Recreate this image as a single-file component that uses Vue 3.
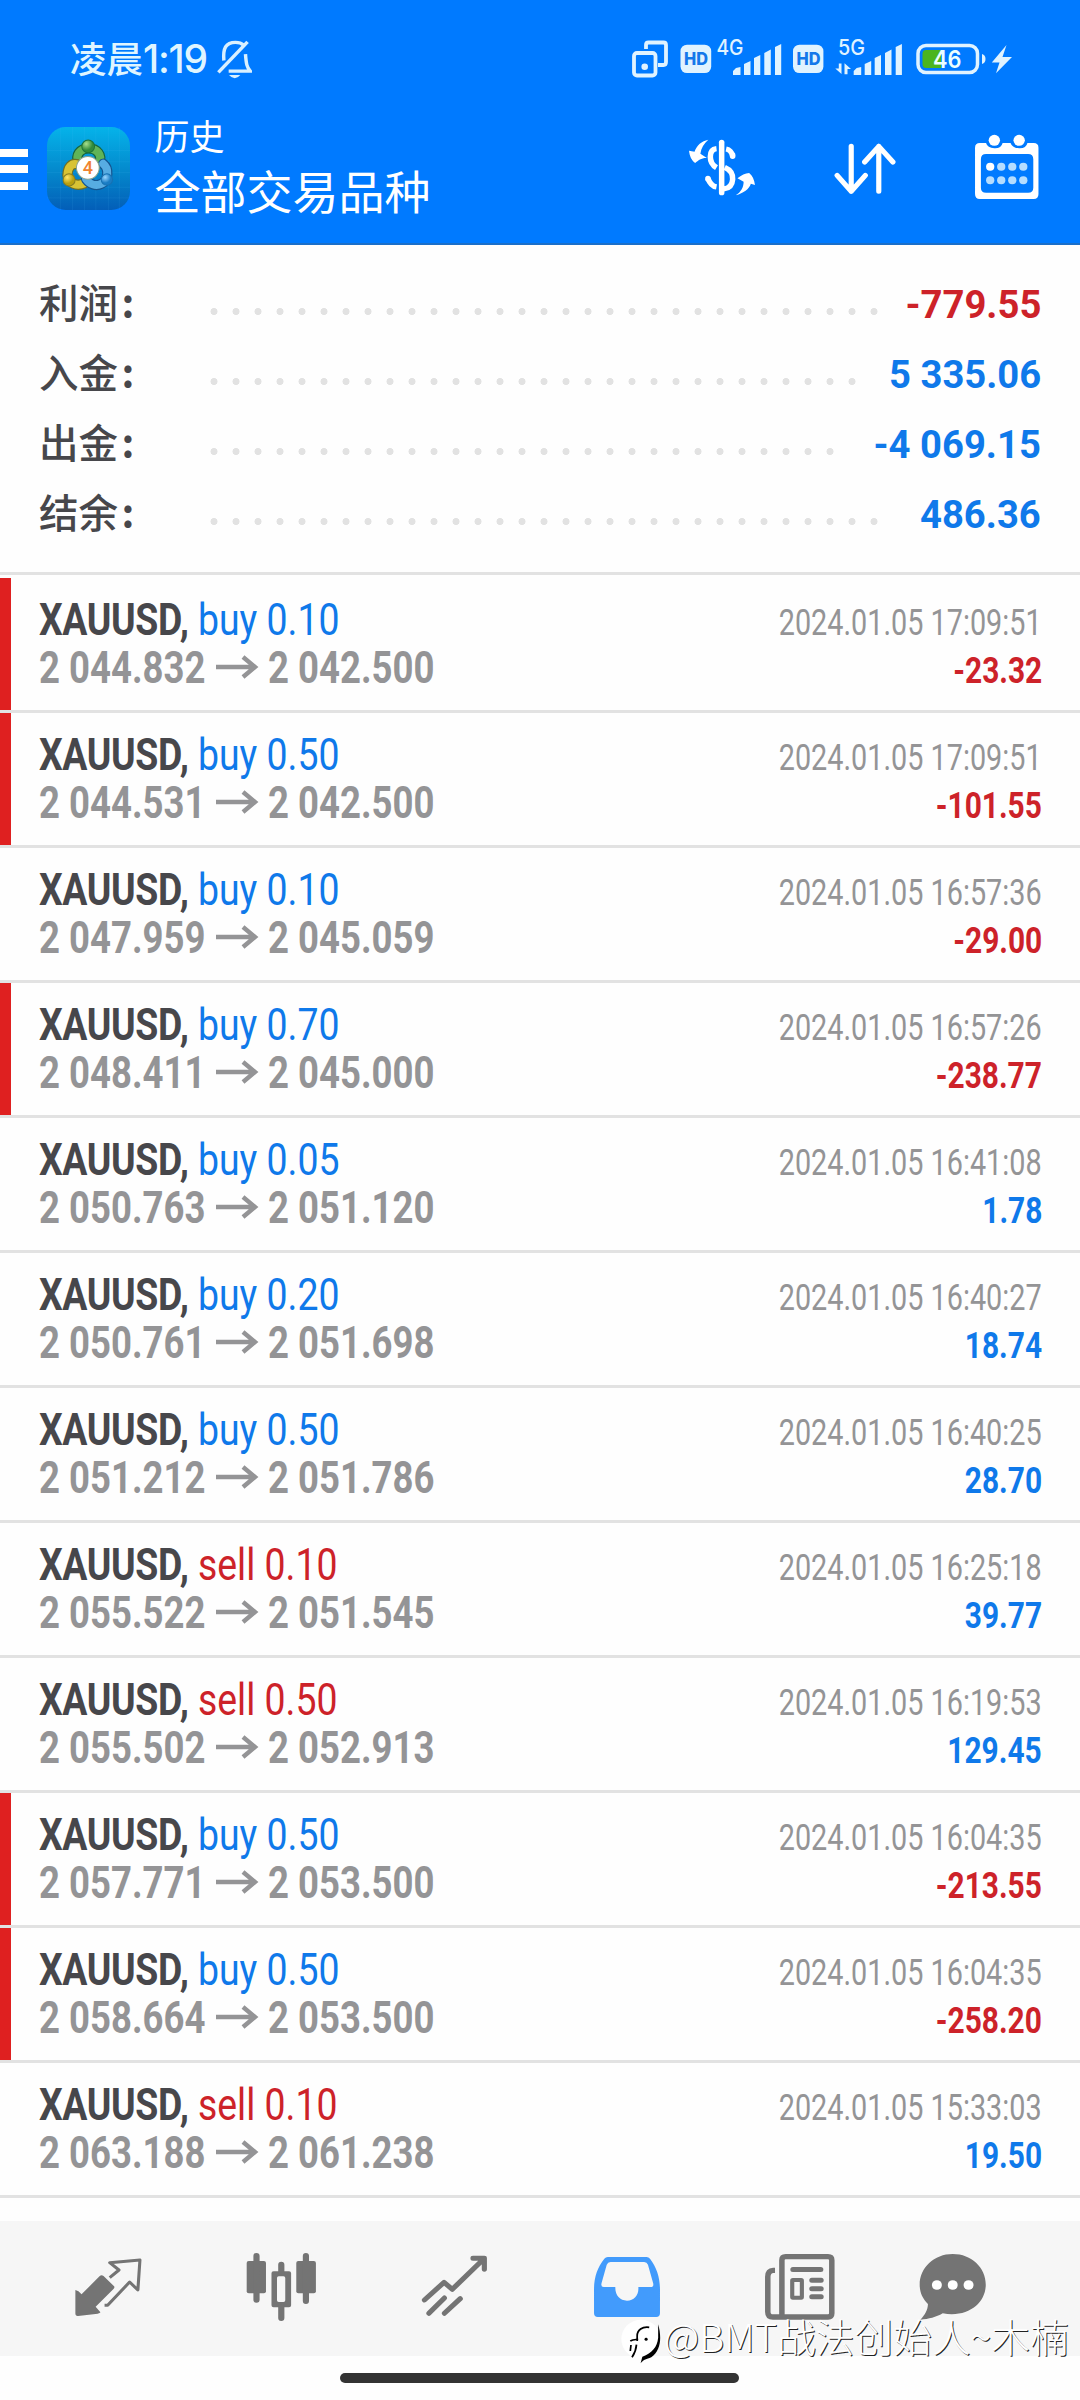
<script setup>
const summary = [
  { label: '利润', value: '-779.55', tone: 'loss', dots: 31 },
  { label: '入金', value: '5 335.06', tone: 'gain', dots: 30 },
  { label: '出金', value: '-4 069.15', tone: 'gain', dots: 29 },
  { label: '结余', value: '486.36', tone: 'gain', dots: 31 },
]
const deal = (side, lot, open, close, time, profit, flagged = false) => ({ side, lot, open, close, time, profit, flagged })
const deals = [
  deal('buy', '0.10', '2 044.832', '2 042.500', '17:09:51', '-23.32', true),
  deal('buy', '0.50', '2 044.531', '2 042.500', '17:09:51', '-101.55', true),
  deal('buy', '0.10', '2 047.959', '2 045.059', '16:57:36', '-29.00'),
  deal('buy', '0.70', '2 048.411', '2 045.000', '16:57:26', '-238.77', true),
  deal('buy', '0.05', '2 050.763', '2 051.120', '16:41:08', '1.78'),
  deal('buy', '0.20', '2 050.761', '2 051.698', '16:40:27', '18.74'),
  deal('buy', '0.50', '2 051.212', '2 051.786', '16:40:25', '28.70'),
  deal('sell', '0.10', '2 055.522', '2 051.545', '16:25:18', '39.77'),
  deal('sell', '0.50', '2 055.502', '2 052.913', '16:19:53', '129.45'),
  deal('buy', '0.50', '2 057.771', '2 053.500', '16:04:35', '-213.55', true),
  deal('buy', '0.50', '2 058.664', '2 053.500', '16:04:35', '-258.20', true),
  deal('sell', '0.10', '2 063.188', '2 061.238', '15:33:03', '19.50'),
]
const signals = [733, 853.7]
</script>

<template>
  <div class="screen">
    <header class="top">
      <div class="status">
        <span class="clock">凌晨<b>1:19</b></span>
        <svg class="bell" viewBox="630 60 102 118" width="35" height="39" preserveAspectRatio="none" fill="none" stroke="#d9f0ff" stroke-width="10">
          <path d="M634 158 L719 66" />
          <path d="M650 122 C647 86 655 67 684 67 C695 67 702 70 707 75" />
          <path d="M664 154 H727 C717 143 715 132 713 103" />
          <path d="M665 166 H698 Q682 186 665 166Z" fill="#d9f0ff" stroke="none" />
        </svg>
        <svg class="indicators" viewBox="630 36 385 48" width="385" height="48" font-family="Inter, sans-serif">
          <g fill="none" stroke="#e0f3ff" stroke-width="3.8">
            <rect x="634" y="53" width="21.500" height="22.500" rx="3" />
            <path d="M646 49V45Q646 42.500 648.500 42.500H663.500Q666 42.500 666 45V62Q666 65 663.500 65H658" />
            <rect x="918" y="45.500" width="59.500" height="27" rx="8" stroke-width="3.500" />
          </g>
          <g fill="#e0f3ff">
            <circle cx="644.700" cy="66.700" r="3.300" />
            <g v-for="x in signals" :key="x" :transform="`translate(${x} 0)`">
              <path d="M0 75V71L3 68L7.500 67V75ZM11 75V64L17.500 61V75ZM21 75V58L27.300 55V75ZM31.300 75V53L37.800 49.500V75ZM42 75V47L48.200 44V75Z" />
            </g>
            <rect x="680.500" y="44.700" width="30.700" height="28.400" rx="6.500" />
            <rect x="793" y="44.700" width="30.400" height="28.400" rx="6.500" />
            <path d="M841.500 63.500V74L835.300 68.500H838.800V63.500ZM844.500 63.300L851 69H847.500V74.300H844.500Z" />
            <path d="M982 54Q985.500 55 985.500 59T982 64Z" />
            <path d="M1006.500 45L991.800 62.500H999.500L996 73.300L1012 57H1002.500Z" />
            <text x="716.500" y="55" font-size="21" font-weight="500" textLength="27" lengthAdjust="spacingAndGlyphs">4G</text>
            <text x="838" y="55" font-size="21" font-weight="500" textLength="27" lengthAdjust="spacingAndGlyphs">5G</text>
          </g>
          <path d="M922.500 54Q922.500 50 926 50H941V68H926Q922.500 68 922.500 64Z" fill="#4bb51f" />
          <g fill="#1478ea" font-size="17" font-weight="800">
            <text x="684" y="65" textLength="24" lengthAdjust="spacingAndGlyphs">HD</text>
            <text x="796.500" y="65" textLength="24" lengthAdjust="spacingAndGlyphs">HD</text>
          </g>
          <text x="933" y="68" font-size="24" font-weight="600" fill="#eaffff" textLength="28.500" lengthAdjust="spacingAndGlyphs">46</text>
        </svg>
      </div>
      <div class="bar">
        <div class="menu"><i></i><i></i><i></i></div>
        <svg class="logo" viewBox="0 0 248 248" width="83" height="83">
          <defs>
            <linearGradient id="tile" x1="0" y1="0" x2="0" y2="1"><stop offset="0" stop-color="#05b3ea" /><stop offset=".55" stop-color="#0487cb" /><stop offset="1" stop-color="#035eb8" /></linearGradient>
            <radialGradient id="gr" cx=".35" cy=".3"><stop offset="0" stop-color="#a8e08d" /><stop offset="1" stop-color="#328b3b" /></radialGradient>
            <radialGradient id="ye" cx=".35" cy=".3"><stop offset="0" stop-color="#ffe76b" /><stop offset="1" stop-color="#b9a00f" /></radialGradient>
            <radialGradient id="bl" cx=".35" cy=".3"><stop offset="0" stop-color="#9ad6ff" /><stop offset="1" stop-color="#197cc4" /></radialGradient>
          </defs>
          <rect width="248" height="248" rx="56" fill="url(#tile)" />
          <path d="M0 70H248M0 104H248M0 136H248M0 180H248M0 212H248M40 0V248M76 0V248M112 0V248M146 0V248M184 0V248M216 0V248" stroke="#5bc8ff" stroke-opacity=".14" stroke-width="2" />
          <g stroke-linecap="round" fill="none">
            <path d="M94 108C84 84 98 64 124 64S166 84 156 108" stroke="#17643c" stroke-width="31" />
            <path d="M94 108C84 84 98 64 124 64S166 84 156 108" stroke="#60b457" stroke-width="24" />
            <path d="M92 112C74 106 62 120 61 144C64 170 90 178 112 168" stroke="#716f22" stroke-width="31" />
            <path d="M92 112C74 106 62 120 61 144C64 170 90 178 112 168" stroke="#d8c334" stroke-width="24" />
            <path d="M168 110C186 124 184 160 162 170C145 178 127 170 117 156" stroke="#14548f" stroke-width="31" />
            <path d="M168 110C186 124 184 160 162 170C145 178 127 170 117 156" stroke="#57ace2" stroke-width="24" />
          </g>
          <circle cx="123" cy="58" r="19" fill="url(#gr)" stroke="#1d7238" stroke-width="3" />
          <circle cx="66" cy="158" r="18" fill="url(#ye)" stroke="#867d22" stroke-width="3" />
          <circle cx="179" cy="157" r="17" fill="url(#bl)" stroke="#1671b2" stroke-width="3" />
          <circle cx="122" cy="122" r="34" fill="#fff" stroke="#8ba28b" stroke-width="3" />
          <text x="122" y="141" font-size="54" font-family="Roboto, sans-serif" font-weight="500" text-anchor="middle" fill="#f08330">4</text>
        </svg>
        <div class="titles"><span>历史</span><strong>全部交易品种</strong></div>
        <svg class="currency" viewBox="430 358 198 172" width="68" height="57.300" preserveAspectRatio="none">
          <path d="M489 360C470 364 455 377 449 396L433 393C435 410 440 421 451 430C460 422 470 414 485 415L466 402C468 385 477 371 489 360ZM569 527C592 520 608 508 613 492L625 496C623 480 618 468 608 460C597 460 585 467 574 476L592 486C592 503 584 517 569 527Z" fill="#fff" />
          <g fill="none" stroke="#fff" stroke-width="16">
            <path d="M528 368V519" stroke-linecap="round" />
            <path d="M513 387Q495 389 495 411T513 444M541 388Q556 391 560 409" />
            <path d="M560 406V410" stroke-linecap="round" />
            <path d="M537 443C555 451 561 462 560 479C559 496 550 506 534 508M513 502Q496 499 488 476" />
            <path d="M488 476V478" stroke-linecap="round" />
          </g>
        </svg>
        <svg class="sort" viewBox="854 367 180 156" width="62" height="52" preserveAspectRatio="none" fill="none" stroke="#fff" stroke-width="15" stroke-linecap="round" stroke-linejoin="round">
          <path d="M904 377V512M863 464L904 512L945 464M984 512V377M943 424L984 377L1025 424" />
        </svg>
        <svg class="calendar" viewBox="1260 342 190 198" width="65.500" height="66" preserveAspectRatio="none">
          <path fill="#fff" fill-rule="evenodd" d="M1277 369H1295Q1299 384 1319 385T1343 369H1366Q1371 384 1391 385T1415 369H1433Q1447 369 1447 383V522Q1447 537 1433 537H1277Q1263 537 1263 522V383Q1263 369 1277 369ZM1295 402Q1280 402 1280 418V503Q1280 518 1295 518H1417Q1432 518 1432 503V418Q1432 402 1417 402Z" />
          <circle cx="1319" cy="361" r="16.500" fill="#fff" /><circle cx="1391" cy="361" r="16.500" fill="#fff" />
          <g fill="#b5ddff"><template v-for="x in [1307, 1339, 1371, 1403]" :key="x"><circle :cx="x" cy="440" r="12" :fill="x === 1307 ? '#fff' : '#b5ddff'" /><circle :cx="x" cy="481" r="12" /></template></g>
        </svg>
      </div>
    </header>

    <section class="summary">
      <div v-for="s in summary" :key="s.label" class="sum-row">
        <span class="sum-label">{{ s.label }}<em>:</em></span>
        <i class="dots" :style="{ width: s.dots * 22 + 'px' }"></i>
        <span class="sum-value" :class="s.tone">{{ s.value }}</span>
      </div>
    </section>

    <main class="deals">
      <article v-for="(d, i) in deals" :key="i" class="deal" :class="{ flagged: d.flagged }">
        <div class="line">
          <span class="symbol"><b>XAUUSD,</b> <span :class="d.side">{{ d.side }} {{ d.lot }}</span></span>
          <span class="time">2024.01.05 {{ d.time }}</span>
        </div>
        <div class="line">
          <span class="prices">
            <span class="price">{{ d.open }}</span>
            <svg class="arrow" viewBox="0 0 43 24" width="43" height="24" fill="none" stroke="#949496" stroke-width="4.400"><path d="M0 12H39M27 2L39 12L27 22" /></svg>
            <span class="price">{{ d.close }}</span>
          </span>
          <span class="profit" :class="d.profit[0] === '-' ? 'loss' : 'gain'">{{ d.profit }}</span>
        </div>
      </article>
    </main>

    <nav class="tabs">
      <a><svg viewBox="216 234 198 180" width="68" height="60" preserveAspectRatio="none">
        <path d="M220 333Q229 334 238 346L291 291Q296 286 302 291L332 321Q336 325 331 330L279 383L293 400Q292 403 285 404L228 411Q220 412 220 403Z" fill="#747474" />
        <path d="M320 296L347 273L320 251L408 243L402 333L378 309L314 379H305" fill="none" stroke="#747474" stroke-width="9" stroke-linejoin="round" />
      </svg></a>
      <a><svg viewBox="714 219 205 210" width="70.600" height="70" preserveAspectRatio="none">
        <g fill="#747474"><rect x="716" y="246" width="56" height="97" rx="6" /><rect x="860" y="246" width="57" height="97" rx="6" /><path fill-rule="evenodd" d="M794 277H839Q845 277 845 283V379Q845 385 839 385H794Q788 385 788 379V283Q788 277 794 277ZM809 292Q804 292 804 297V364Q804 369 809 369H823Q828 369 828 364V297Q828 292 823 292Z" /></g>
        <path d="M744.500 231V362M888 231V366M816.500 257V278M816.500 384V417" stroke="#747474" stroke-width="18" stroke-linecap="round" />
      </svg></a>
      <a><svg viewBox="1222 228 194 187" width="66.800" height="62.300" preserveAspectRatio="none" fill="none" stroke="#747474" stroke-width="15" stroke-linecap="round" stroke-linejoin="round">
        <path d="M1232 363L1289 310L1313 331L1404 240M1373 238H1406V271M1245 403L1290 357M1290 403L1336 359" />
      </svg></a>
      <a><svg viewBox="155 228 198 186" width="68" height="62" preserveAspectRatio="none">
        <path fill="#429bfc" fill-rule="evenodd" d="M198 231H311Q317 231 321 236C340 262 350 292 350 327V400Q350 411 339 411H169Q158 411 158 400V327C158 292 168 262 188 236Q192 231 198 231ZM206 246Q198 246 195 254L180 309Q177 321 186 321H220C219 346 233 362 254 362S289 346 287 321H323Q333 321 330 309L315 254Q312 246 304 246Z" />
      </svg></a>
      <a><svg viewBox="654 219 208 204" width="71.600" height="68" preserveAspectRatio="none" fill="none" stroke="#747474">
        <path d="M686 271H681Q665 272 665 290V395Q665 411 680 411H840Q851 411 851 400V241Q851 230 840 230H717Q706 230 706 241V411" stroke-width="16" />
        <path d="M738 268.500H819M793 301H820M793 326H820M793 350.500H820" stroke-width="15" stroke-linecap="round" />
        <rect x="736" y="300" width="28" height="53" rx="2" stroke-width="12" />
      </svg></a>
      <a><svg viewBox="1101 219 197 204" width="67.800" height="68" preserveAspectRatio="none">
        <path d="M1199 222C1254 222 1295 263 1295 314C1295 369 1243 414 1170 400C1150 412 1130 417 1105 419C1118 405 1127 389 1127 372C1111 355 1103 337 1103 314C1103 263 1145 222 1199 222Z" fill="#747474" />
        <g fill="#fff"><circle cx="1153" cy="315" r="14.500" /><circle cx="1199" cy="315" r="14.500" /><circle cx="1245" cy="315" r="14.500" /></g>
      </svg></a>
    </nav>
    <footer class="home"><i></i></footer>

    <div class="mark">
      <svg viewBox="235 412 118 142" width="40.600" height="47.300" preserveAspectRatio="none">
        <ellipse cx="293" cy="478" rx="57" ry="58" fill="#fff" />
        <path d="M343 434C354 474 351 512 323 533C309 539 301 539 292 551L297 531C326 519 340 503 343 474Z" fill="#000" />
        <path d="M317 443C297 440 282 451 282 469V484M262 484C270 479 275 480 285 479M280 495C279 511 276 519 267 533M264 496L262 514" fill="none" stroke="#000" stroke-width="5" />
        <circle cx="308" cy="479" r="4.500" fill="#000" />
      </svg>
      <span>@BMT战法创始人~木楠</span>
    </div>
  </div>
</template>

<style>
body { margin: 0; background: #fff; }
</style>
<style scoped>
.screen { position: relative; width: 1080px; height: 2400px; overflow: hidden; background: #fefefe; display: flex; flex-direction: column; font-family: Roboto, "Noto Sans CJK SC", sans-serif; color: #47474b; }
.top { height: 245px; box-sizing: border-box; background: #007aff; border-bottom: 2px solid #1b6fc9; color: #fff; }
.status { height: 108px; display: flex; align-items: flex-start; padding-left: 70px; }
.clock { width: 147px; margin-top: 33px; font: 500 36.500px/50px "Noto Sans CJK SC", sans-serif; color: #dff5ff; white-space: nowrap; }
.clock b { font: 500 39px/50px Inter, sans-serif; letter-spacing: -1.200px; }
.bell { margin-top: 40px; }
.indicators { margin: 36px 0 0 378px; }
.bar { display: flex; align-items: flex-start; height: 135px; }
.menu { width: 27.500px; margin-top: 41px; display: flex; flex-direction: column; gap: 8.700px; }
.menu i { height: 7.800px; background: #fff; }
.logo { margin: 18.500px 0 0 19px; }
.titles { width: 535px; margin: 1px 0 0 25px; display: flex; flex-direction: column; font-family: "Noto Sans CJK SC", sans-serif; }
.titles span { font-size: 35px; line-height: 52px; font-weight: 400; }
.titles strong { font-size: 46px; line-height: 56px; font-weight: 400; }
.currency { margin-top: 31.300px; margin-left: -2px; }
.sort { margin: 34.500px 0 0 78.500px; }
.calendar { margin: 26px 0 0 77.500px; }
.summary { height: 306px; padding-top: 21px; border-bottom: 3px solid #e2e2e2; margin-bottom: 3px; flex: none; }
.sum-row { height: 70px; display: flex; align-items: baseline; padding: 0 39px 0 39px; line-height: 70px; font-size: 39.500px; }
.sum-label { width: 163.500px; font-family: "Noto Sans CJK SC", sans-serif; font-weight: 500; }
.sum-label em { font-style: normal; font-weight: 700; margin-left: 3.500px; }
.dots { height: 7px; align-self: flex-start; margin: 42px auto 0 0; background: radial-gradient(circle at 11px 3.500px, #e2e2e2 3.200px, transparent 3.800px) 0 0 / 22px 7px repeat-x; }
.sum-value { font-weight: 700; transform: scaleX(.968); transform-origin: right; }
.loss { color: #cd2229; }
.gain { color: #0f79ea; }
.buy { color: #0f79ea; }
.sell { color: #cd2229; }
.deals { flex: none; }
.deal { height: 135px; box-sizing: border-box; padding: 18px 38px 0 39px; border-bottom: 3px solid #e2e2e2; }
.deal.flagged { background: linear-gradient(#df2020, #df2020) 0 0 / 11px 100% no-repeat padding-box; }
.line { height: 48px; display: flex; align-items: baseline; justify-content: space-between; line-height: 48px; white-space: nowrap; }
.symbol { font-size: 44px; transform: scaleX(.85); transform-origin: left; }
.symbol b { letter-spacing: -.45px; }
.prices { display: flex; align-items: center; font-size: 44px; font-weight: 700; color: #949496; }
.price { width: 164px; transform: scaleX(.83); transform-origin: left; }
.arrow { margin: 0 9px 3px 13px; }
.time { font-size: 36px; color: #949496; transform: scaleX(.8); transform-origin: right; }
.profit { font-size: 36px; font-weight: 700; transform: scaleX(.83); transform-origin: right; }
.tabs { margin-top: 23px; height: 135px; flex: none; background: #f6f6f6; display: flex; padding-left: 21.500px; }
.tabs a { width: 173px; height: 131px; display: flex; justify-content: center; align-items: center; flex: none; }
.tabs a:last-child { width: 132px; }
.home { flex: 1; display: flex; justify-content: center; align-items: flex-start; }
.home i { width: 399px; height: 10px; border-radius: 5px; background: #333; margin: 17px 2px 0 0; }
.mark { position: absolute; left: 620.500px; top: 2317px; display: flex; align-items: flex-start; gap: 3px; }
.mark span { font: 200 38.700px/44px "Noto Sans CJK SC", sans-serif; margin-top: -4.500px; color: #fff; text-shadow: 1px 1px 0 #222; white-space: nowrap; }
</style>
